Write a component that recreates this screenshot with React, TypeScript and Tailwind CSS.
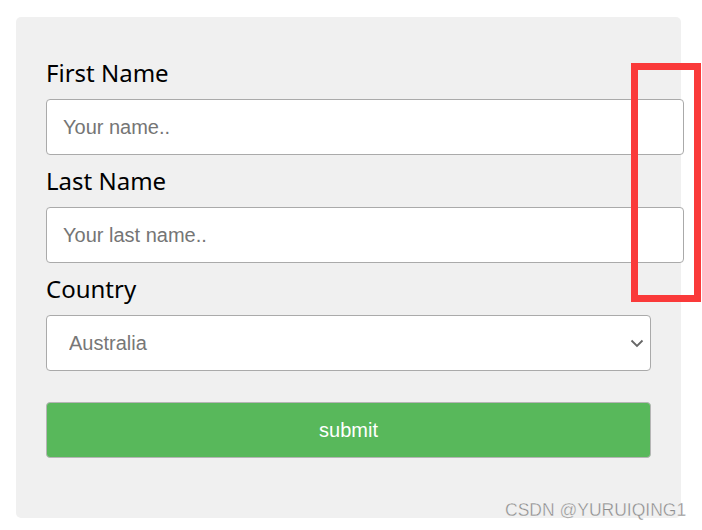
import { useState } from 'react'

export default function App() {
  const [country, setCountry] = useState('australia')

  return (
    <div className="relative w-[702px] h-[530px] bg-white" style={{ fontFamily: '"Noto Sans", sans-serif' }}>
      <div className="ml-[16px] pt-[17px]">
        <div className="w-[665px] h-[501px] rounded-[5px] bg-[#f0f0f0] px-[30px] pt-[30px]">
          <form onSubmit={e => e.preventDefault()}>
            <label className="block text-[24px] leading-[52px] text-black">First Name</label>
            <input
              className="box-content block w-[604px] h-[54px] px-[16px] py-0 border border-[#aaa] rounded-[4px] bg-white text-[20px] text-black placeholder:text-[#757575] outline-none"
              style={{ fontFamily: '"Liberation Sans", Arial, sans-serif' }}
              placeholder="Your name.."
            />
            <label className="block text-[24px] leading-[52px] text-black">Last Name</label>
            <input
              className="box-content block w-[604px] h-[54px] px-[16px] py-0 border border-[#aaa] rounded-[4px] bg-white text-[20px] text-black placeholder:text-[#757575] outline-none"
              style={{ fontFamily: '"Liberation Sans", Arial, sans-serif' }}
              placeholder="Your last name.."
            />
            <label className="block text-[24px] leading-[52px] text-black">Country</label>
            <div className="relative w-[605px]">
              <select
                className="appearance-none block w-[605px] h-[56px] pl-[22px] border border-[#aaa] rounded-[4px] bg-white text-[20px] text-[#777] outline-none"
                style={{ fontFamily: '"Liberation Sans", Arial, sans-serif' }}
                value={country}
                onChange={e => setCountry(e.target.value)}
              >
                <option value="australia">Australia</option>
                <option value="canada">Canada</option>
                <option value="usa">USA</option>
              </select>
              <svg className="pointer-events-none absolute left-[584px] top-[24px]" width="14" height="9" viewBox="0 0 14 9">
                <path d="M1.5 1.5 L7 7 L12.5 1.5" fill="none" stroke="#666" strokeWidth="1.8" />
              </svg>
            </div>
            <button
              type="submit"
              className="mt-[31px] block w-[605px] h-[56px] border border-[#b5b5b5] rounded-[4px] bg-[#58b85b] text-white text-[20px]"
              style={{ fontFamily: '"Liberation Sans", Arial, sans-serif' }}
            >
              submit
            </button>
          </form>
        </div>
      </div>
      {/* annotation box */}
      <div className="absolute left-[631px] top-[63px] w-[70px] h-[239px] border-[7px] border-[#fa3a3a]" />
      <div
        className="absolute left-[505px] top-[498px] text-[17.5px] leading-[24px] text-[#8c8c8c]"
        style={{ fontFamily: '"Liberation Sans", Arial, sans-serif', WebkitTextStroke: '0.3px #ffffff' }}
      >
        CSDN @YURUIQING1
      </div>
    </div>
  )
}
